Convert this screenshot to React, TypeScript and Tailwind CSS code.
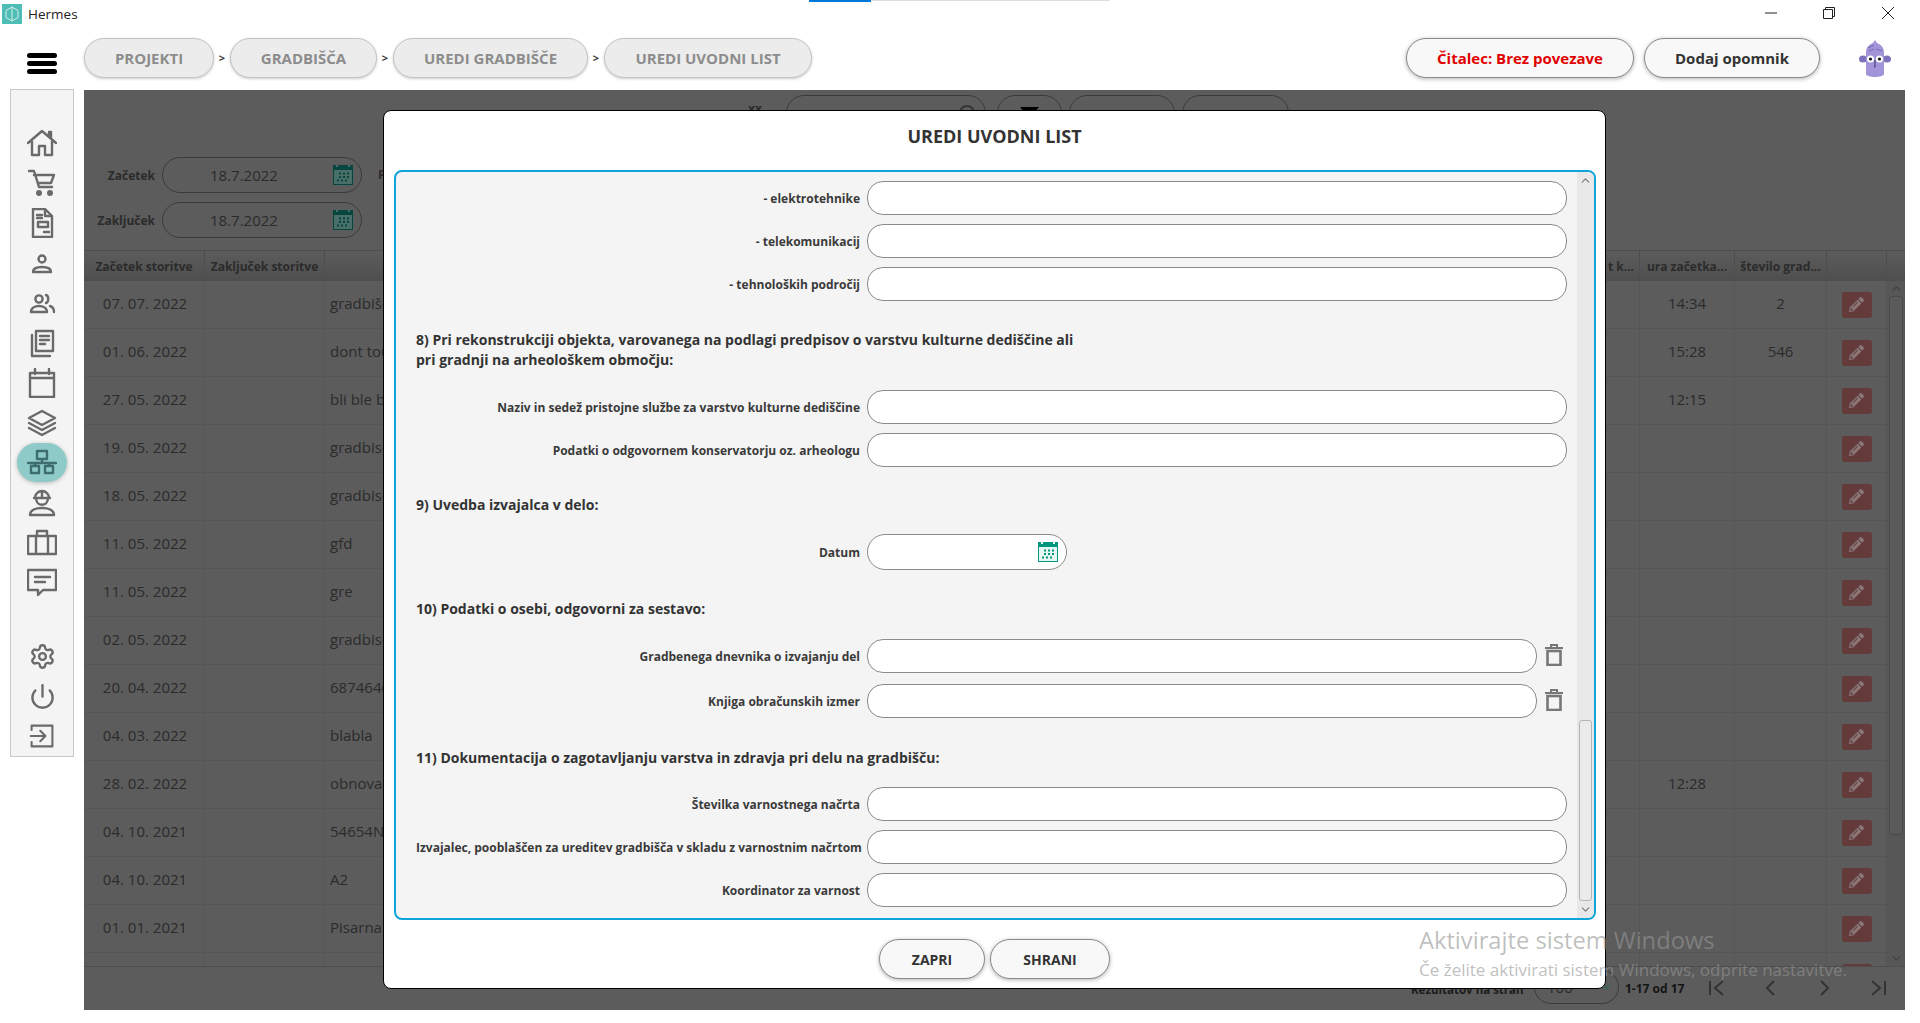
import { ChevronDown, ChevronUp, Power, Settings } from "lucide-react";
import { FaPencilAlt } from "react-icons/fa";

const rows = [
  { date: "07. 07. 2022", name: "gradbišče", time: "14:34", count: "2" },
  { date: "01. 06. 2022", name: "dont touch", time: "15:28", count: "546" },
  { date: "27. 05. 2022", name: "bli ble blo", time: "12:15", count: "" },
  { date: "19. 05. 2022", name: "gradbisce", time: "", count: "" },
  { date: "18. 05. 2022", name: "gradbisce", time: "", count: "" },
  { date: "11. 05. 2022", name: "gfd", time: "", count: "" },
  { date: "11. 05. 2022", name: "gre", time: "", count: "" },
  { date: "02. 05. 2022", name: "gradbisce", time: "", count: "" },
  { date: "20. 04. 2022", name: "6874646", time: "", count: "" },
  { date: "04. 03. 2022", name: "blabla", time: "", count: "" },
  { date: "28. 02. 2022", name: "obnova", time: "12:28", count: "" },
  { date: "04. 10. 2021", name: "54654N", time: "", count: "" },
  { date: "04. 10. 2021", name: "A2", time: "", count: "" },
  { date: "01. 01. 2021", name: "Pisarna", time: "", count: "" },
  { date: "", name: "", time: "", count: "" },
];

function NavIcon({ children, w = 30, h = 30 }: { children: React.ReactNode; w?: number; h?: number }) {
  return (
    <svg width={w} height={h} viewBox="0 0 30 30" fill="none" stroke="currentColor" strokeWidth="2.4" strokeLinecap="round" strokeLinejoin="round">
      {children}
    </svg>
  );
}

const topIcons = [
  <NavIcon key="home"><path d="M1 15 15 3l14 12M5 13v14h7v-9h6v9h7V13M22 7V4h2v5" /></NavIcon>,
  <NavIcon key="cart"><path d="M2 3h5l5 16h13M7 7h20l-3 8H11" /><circle cx="12" cy="25" r="1.8" fill="currentColor" /><circle cx="23" cy="25" r="1.8" fill="currentColor" /></NavIcon>,
  <NavIcon key="doc"><path d="M6 1h12l7 7v21H6zM18 1v7h7M10 7h5M10 10h5M11 14h10v5H11zM17 24h5" /></NavIcon>,
  <NavIcon key="person"><circle cx="15" cy="11" r="3.5" /><path d="M6 24c0-4 4-5 9-5s9 1 9 5z" /></NavIcon>,
  <NavIcon key="people"><circle cx="12" cy="11" r="3.6" /><path d="M4 24c0-4 4-6 8-6s8 2 8 6zM19 7c3 1 3 7 0 8M23 18c3 1 4 3 4 6" /></NavIcon>,
  <NavIcon key="pages"><path d="M9 3h17v20H9zM5 7v21h18M13 8h9M13 12h9M13 16h5" /></NavIcon>,
  <NavIcon key="calendar"><path d="M3 5h24v24H3zM3 10h24M8 1v5M22 1v5" /></NavIcon>,
  <NavIcon key="layers"><path d="M15 3 28 10l-13 7L2 10zM2 15l13 7 13-7M2 20l13 7 13-7" /></NavIcon>,
  <NavIcon key="network"><path d="M10 4h10v8H10zM15 12v4M1 16h28M8 16v3M22 16v3M4 19h8v7H4zM18 19h8v7h-8z" /></NavIcon>,
  <NavIcon key="worker"><path d="M7 11h16M8 11a7 7 0 0 1 14 0M15 4v7M9 11c0 9 12 9 12 0M3 28c0-5 6-7 12-7s12 2 12 7z" /></NavIcon>,
  <NavIcon key="case"><path d="M1 9h28v18H1zM10 9V4h10v5M9 9v18M21 9v18" /></NavIcon>,
  <NavIcon key="chat"><path d="M1 3h28v20H16l-5 5v-5H1zM8 10h15M8 15h10" /></NavIcon>,
];

const bottomIcons = [
  <Settings key="settings" size={27} strokeWidth={2.1} />,
  <Power key="power" size={27} strokeWidth={2.1} />,
  <NavIcon key="exit" w={26} h={26}><path d="M3 8V3h24v24H3v-5M2 15h17M13 9l6 6-6 6" /></NavIcon>,
];

function CalendarIcon({ color, line }: { color: string; line: string }) {
  return (
    <svg width="20" height="20" viewBox="0 0 20 20" className="shrink-0">
      <rect x="0" y="0" width="20" height="20" fill={color} />
      <rect x="3" y="0" width="2" height="2" fill={line} />
      <rect x="15" y="0" width="2" height="2" fill={line} />
      <rect x="1" y="5" width="18" height="14" fill={line} />
      {[7.5, 11, 14.5].map((y) =>
        [5, 9, 13].map((x) => <rect key={`${x}-${y}`} x={x + (y === 14.5 ? -1 : 1)} y={y} width="2" height="2" fill={color} />),
      )}
    </svg>
  );
}

function TrashIcon() {
  return (
    <svg width="18" height="22" viewBox="0 0 18 22" fill="none" stroke="#777777" className="mb-[2px] ml-2">
      <path d="M0 4h18" strokeWidth="2" />
      <path d="M6 3V1h6v2" strokeWidth="2" />
      <rect x="2.5" y="7" width="13" height="14" strokeWidth="2.6" />
    </svg>
  );
}

function Field({ label, width = "w-[700px]", trash }: { label: string; width?: string; trash?: boolean }) {
  return (
    <div className="flex items-center">
      <label className="w-[444px] whitespace-nowrap pt-[2px] text-right text-[12px] font-bold text-[#3a3a3a]">{label}</label>
      <input readOnly className={`ml-[7px] h-[34px] ${width} rounded-[16px] border-[1.5px] border-[#8a8a8a] bg-white`} />
      {trash && <TrashIcon />}
    </div>
  );
}

function Heading({ children, className }: { children: React.ReactNode; className: string }) {
  return <p className={`w-[800px] text-[14px] font-bold leading-[20px] text-[#333333] ${className}`}>{children}</p>;
}

function Crumb({ label, width }: { label: string; width: string }) {
  return (
    <div className={`flex h-10 ${width} items-center justify-center rounded-[20px] border-[1.5px] border-[#c4c4c4] bg-[#ececec] text-[15px] font-bold text-[#8c8c8c] shadow-[0_1px_3px_rgba(0,0,0,0.2)]`}>
      {label}
    </div>
  );
}

function Sep() {
  return <span className="w-4 text-center text-[11px] font-bold text-[#333333]">&gt;</span>;
}

function Avatar() {
  return (
    <svg width="32" height="38" viewBox="0 0 32 38">
      <ellipse cx="4" cy="20" rx="4" ry="3.5" fill="#7f72bd" />
      <ellipse cx="28" cy="20" rx="4" ry="3.5" fill="#7f72bd" />
      <path d="M7 13c0-5 4-8 7-9l2-3 2 3c3 1 7 4 7 9v22c0 2-5 3-9 3s-9-1-9-3z" fill="#a294d8" />
      <path d="M9 9 15 6M17 10l6 2M10 12l5-2" stroke="#7d6fb8" strokeWidth="1.2" />
      <circle cx="11.5" cy="20" r="3.6" fill="#ffffff" />
      <circle cx="20.5" cy="20" r="3.6" fill="#ffffff" />
      <circle cx="11.5" cy="20" r="1.6" fill="#111111" />
      <circle cx="20.5" cy="20" r="1.6" fill="#111111" />
      <path d="M16 21v7h-1" stroke="#3b3360" strokeWidth="1" fill="none" />
    </svg>
  );
}

function Modal() {
  return (
    <div className="absolute left-[299px] top-[20px] flex h-[879px] w-[1223px] flex-col rounded-[8px] border border-black bg-white pl-[10px]">
      <h2 className="flex h-[50px] w-[1201px] items-center justify-center text-[18px] font-bold text-[#333333]">UREDI UVODNI LIST</h2>
      <div className="mt-[9px] flex h-[750px] w-[1202px] overflow-hidden rounded-[8px] border-2 border-[#0ea5d9] bg-[#f4f4f4]">
        <div className="flex-1 overflow-hidden pl-5 pt-[9px]">
          <div className="flex flex-col gap-[9px]">
            <Field label="- elektrotehnike" />
            <Field label="- telekomunikacij" />
            <Field label="- tehnoloških področij" />
          </div>
          <Heading className="mb-5 mt-[29px]">
            8) Pri rekonstrukciji objekta, varovanega na podlagi predpisov o varstvu kulturne dediščine ali
            <br />
            pri gradnji na arheološkem območju:
          </Heading>
          <div className="flex flex-col gap-[9px]">
            <Field label="Naziv in sedež pristojne službe za varstvo kulturne dediščine" />
            <Field label="Podatki o odgovornem konservatorju oz. arheologu" />
          </div>
          <Heading className="mb-[19px] mt-[28px]">9) Uvedba izvajalca v delo:</Heading>
          <div className="flex items-center">
            <label className="w-[444px] pt-[2px] text-right text-[12px] font-bold text-[#3a3a3a]">Datum</label>
            <div className="ml-[7px] flex h-9 w-[200px] items-center justify-end rounded-[18px] border-[1.5px] border-[#8a8a8a] bg-white pr-2">
              <CalendarIcon color="#00967f" line="#e8f6f3" />
            </div>
          </div>
          <Heading className="mb-5 mt-[29px]">10) Podatki o osebi, odgovorni za sestavo:</Heading>
          <div className="flex flex-col gap-[11px]">
            <Field label="Gradbenega dnevnika o izvajanju del" width="w-[670px]" trash />
            <Field label="Knjiga obračunskih izmer" width="w-[670px]" trash />
          </div>
          <Heading className="mb-[19px] mt-[30px]">11) Dokumentacija o zagotavljanju varstva in zdravja pri delu na gradbišču:</Heading>
          <div className="flex flex-col gap-[9px]">
            <Field label="Številka varnostnega načrta" />
            <Field label="Izvajalec, pooblaščen za ureditev gradbišča v skladu z varnostnim načrtom" />
            <Field label="Koordinator za varnost" />
          </div>
        </div>
        <div className="flex w-[17px] flex-col items-center bg-[#e8e8e8] text-[#777777]">
          <ChevronUp size={13} className="mt-[2px]" />
          <div className="mt-auto h-[181px] w-[13px] rounded-[3px] border border-[#b5b5b5] bg-[#ebebeb]" />
          <ChevronDown size={13} className="mb-[2px] mt-[2px]" />
        </div>
      </div>
      <div className="mt-[19px] flex w-[1201px] justify-center gap-[5px] text-[14px] font-bold text-[#333333]">
        <button className="h-10 w-[106px] rounded-[20px] border-[1.5px] border-[#8a8a8a] bg-[#f8f8f8] shadow-[0_1px_4px_rgba(0,0,0,0.3)]">ZAPRI</button>
        <button className="h-10 w-[120px] rounded-[20px] border-[1.5px] border-[#8a8a8a] bg-[#f8f8f8] shadow-[0_1px_4px_rgba(0,0,0,0.3)]">SHRANI</button>
      </div>
    </div>
  );
}

function DateFilter({ label, className, extra }: { label: string; className: string; extra?: string }) {
  return (
    <div className={`flex items-center ${className}`}>
      <label className="w-[71px] pt-[2px] text-right text-[12px] font-bold text-[#2b2b2b]">{label}</label>
      <div className="ml-[7px] flex h-9 w-[200px] items-center rounded-[18px] border border-[#3a3a3a] pl-[47px] pr-2 text-[15px] text-[#2b2b2b]">
        <span className="w-[124px]">18.7.2022</span>
        <CalendarIcon color="#07463e" line="#4a6f69" />
      </div>
      {extra && <span className="ml-[16px] text-[12px] font-bold text-[#2b2b2b]">{extra}</span>}
    </div>
  );
}

export default function App() {
  return (
    <div className="relative flex h-[1023px] w-[1920px] flex-col overflow-hidden bg-white font-['Open_Sans',sans-serif]">
      {/* window title bar */}
      <div className="flex h-[30px] items-center pl-[2px]">
        <svg width="20" height="20" viewBox="0 0 20 20" className="-mt-[2px]">
          <rect width="20" height="20" fill="#4dbdb5" />
          <path d="M10 3 16 6.5v7L10 17l-6-3.5v-7zM10 3v14" fill="none" stroke="#d6f0ee" strokeWidth="1" />
        </svg>
        <span className="ml-[6px] -mt-[2px] text-[13.5px] text-[#222222]">Hermes</span>
        <div className="ml-auto flex items-center text-[#222222]">
          <svg width="12" height="12" viewBox="0 0 12 12" className="-mt-[4px]" fill="none" stroke="currentColor"><path d="M0 6h12" /></svg>
          <svg width="12" height="12" viewBox="0 0 12 12" className="-mt-[4px] ml-[46px]" fill="none" stroke="currentColor"><path d="M.5 2.5h9v9h-9zM2.5 2.5v-2h9v9h-2" /></svg>
          <svg width="12" height="12" viewBox="0 0 12 12" className="-mt-[4px] ml-[47px] mr-[26px]" fill="none" stroke="currentColor"><path d="M0 0l12 12M12 0 0 12" /></svg>
        </div>
      </div>
      <div className="absolute left-[809px] top-0 h-[2px] w-[62px] bg-[#0078d7]" />
      <div className="absolute left-[871px] top-0 h-px w-[239px] bg-[#dddddd]" />

      {/* app header */}
      <div className="flex h-[60px] items-center pb-1 pl-[27px]">
        <div className="mr-[27px] mt-[10px] flex w-[30px] flex-col gap-[3px]">
          <div className="h-[5px] rounded-full bg-black" />
          <div className="h-[5px] rounded-full bg-black" />
          <div className="h-[5px] rounded-full bg-black" />
        </div>
        <Crumb label="PROJEKTI" width="w-[130px]" />
        <Sep />
        <Crumb label="GRADBIŠČA" width="w-[147px]" />
        <Sep />
        <Crumb label="UREDI GRADBIŠČE" width="w-[195px]" />
        <Sep />
        <Crumb label="UREDI UVODNI LIST" width="w-[208px]" />
        <button className="ml-auto h-10 w-[228px] rounded-[20px] border-[1.5px] border-[#8a8a8a] bg-[#f8f8f8] text-[15px] font-bold text-[#e00000] shadow-[0_1px_4px_rgba(0,0,0,0.3)]">Čitalec: Brez povezave</button>
        <button className="ml-[10px] h-10 w-[176px] rounded-[20px] border-[1.5px] border-[#8a8a8a] bg-[#f8f8f8] text-[15px] font-bold text-[#333333] shadow-[0_1px_4px_rgba(0,0,0,0.3)]">Dodaj opomnik</button>
        <div className="ml-[39px] mr-[29px]"><Avatar /></div>
      </div>

      <div className="flex flex-1 items-start">
        {/* sidebar */}
        <nav className="-mt-px ml-[10px] flex h-[668px] w-[64px] flex-col items-center border border-[#c8c8c8] bg-[#f4f4f4] pt-[33px] text-[#6a6a6a]">
          {topIcons.map((icon, i) => (
            <div key={i} className={`flex h-10 w-[50px] items-center justify-center ${i === 8 ? "rounded-[24px] bg-[#8ecbc8] text-[#3d6d6d] shadow-[0_1px_4px_rgba(0,0,0,0.25)]" : ""}`}>
              {icon}
            </div>
          ))}
          <div className="h-[34px]" />
          {bottomIcons.map((icon, i) => (
            <div key={i} className="flex h-10 items-center justify-center">
              {icon}
            </div>
          ))}
        </nav>

        {/* dimmed page behind the dialog */}
        <main className="relative ml-[10px] flex h-[920px] w-[1821px] flex-col bg-[#5c5c5c] pt-[5px] text-[#2b2b2b]">
          <div className="flex h-9">
            <span className="ml-[664px] mt-[5px] w-[38px] text-[12px] font-bold">xx</span>
            <div className="flex h-9 w-[200px] justify-end rounded-[18px] border border-[#3a3a3a] pr-[10px] pt-[9px]">
              <div className="h-4 w-4 rounded-full border-2 border-[#333333]" />
            </div>
            <div className="ml-[11px] flex h-9 w-[65px] justify-center rounded-[18px] border border-[#3a3a3a] pt-[11px]">
              <svg width="19" height="14" viewBox="0 0 19 14"><path d="M0 0h19l-7 8v6H7V8z" fill="#000000" /></svg>
            </div>
            <div className="ml-[7px] h-9 w-[106px] rounded-[18px] border border-[#3a3a3a]" />
            <div className="ml-[7px] h-9 w-[107px] rounded-[18px] border border-[#3a3a3a]" />
          </div>
          <DateFilter label="Začetek" className="mt-[26px]" extra="P" />
          <DateFilter label="Zaključek" className="mt-[9px]" />

          {/* table */}
          <div className="mt-3 flex h-[31px] items-center border-y border-[#4e4e4e] bg-gradient-to-b from-[#5c5c5c] to-[#4f4f4f] text-[12px] font-bold">
            <div className="w-[120px] pt-[2px] text-center">Začetek storitve</div>
            <div className="w-[120px] border-l border-[#4e4e4e] pt-[2px] text-center leading-[27px]">Zaključek storitve</div>
            <div className="w-[1315px] border-l border-[#4e4e4e] pr-[5px] pt-[2px] text-right leading-[27px]">t k...</div>
            <div className="w-[95px] border-l border-[#4e4e4e] pt-[2px] text-center leading-[27px]">ura začetka...</div>
            <div className="w-[92px] border-l border-[#4e4e4e] pt-[2px] text-center leading-[27px]">število grad...</div>
            <div className="h-full w-[60px] border-l border-[#4e4e4e]" />
            <div className="h-full flex-1 border-l border-[#4e4e4e]" />
          </div>
          <div className="flex h-[685px]">
            <div className="w-[1802px] overflow-hidden">
              {rows.map((row, i) => (
                <div key={i} className="flex h-[48px] shrink-0 items-center border-b border-[#565656] text-[15px]">
                  <div className="flex h-full w-[120px] items-center justify-center pb-[2px] pl-[2px]">{row.date}</div>
                  <div className="h-full w-[120px] border-l border-[#565656]" />
                  <div className="flex h-full w-[1315px] items-center border-l border-[#565656] pb-[2px] pl-[5px]">{row.name}</div>
                  <div className="flex h-full w-[95px] items-center justify-center border-l border-[#565656] pb-[2px]">{row.time}</div>
                  <div className="flex h-full w-[92px] items-center justify-center border-l border-[#565656] pb-[2px]">{row.count}</div>
                  <div className="flex h-full w-[60px] items-center justify-center border-l border-[#565656]">
                    <div className="flex h-[26px] w-[30px] items-center justify-center rounded-[3px] bg-[#643a3a] text-[#8a7676]">
                      <FaPencilAlt size={15} />
                    </div>
                  </div>
                </div>
              ))}
            </div>
            <div className="flex flex-1 flex-col items-center border-l border-[#565656] bg-[#575757] text-[#3f3f3f]">
              <ChevronUp size={13} className="mt-[1px]" />
              <div className="mt-[1px] h-[539px] w-[14px] rounded-[3px] border border-[#4a4a4a] bg-[#5a5a5a]" />
              <ChevronDown size={13} className="mb-[1px] mt-auto" />
            </div>
          </div>
          <div className="relative flex flex-1 items-center justify-end border-t border-[#4e4e4e] text-[12px] font-bold">
            <span className="absolute left-[1327px] top-[14px] whitespace-nowrap text-[11.5px] text-[#1c1c1c]">Rezultatov na stran</span>
            <div className="absolute left-[1450px] top-[3px] flex h-[34px] w-[85px] items-center justify-between rounded-[17px] border border-[#3a3a3a] pl-[12px] pr-[6px] text-[15px] font-normal">
              100
              <ChevronDown size={12} className="text-[#0a6b60]" />
            </div>
            <span className="absolute left-[1541px] top-[13px] text-[#141414]">1-17 od 17</span>
            <svg width="16" height="16" viewBox="0 0 16 16" className="absolute left-[1625px] top-[13px]" fill="none" stroke="#333333" strokeWidth="2"><path d="M1 1v14M14 1 6 8l8 7" /></svg>
            <svg width="10" height="16" viewBox="0 0 10 16" className="absolute left-[1681px] top-[13px]" fill="none" stroke="#333333" strokeWidth="2"><path d="M9 1 2 8l7 7" /></svg>
            <svg width="10" height="16" viewBox="0 0 10 16" className="absolute left-[1736px] top-[13px]" fill="none" stroke="#333333" strokeWidth="2"><path d="m1 1 7 7-7 7" /></svg>
            <svg width="16" height="16" viewBox="0 0 16 16" className="absolute left-[1786px] top-[13px]" fill="none" stroke="#333333" strokeWidth="2"><path d="m2 1 8 7-8 7M15 1v14" /></svg>
          </div>
          <Modal />
        </main>
      </div>

      {/* Windows activation watermark */}
      <div className="pointer-events-none absolute left-[1419px] top-[925px] whitespace-nowrap text-[rgba(150,150,150,0.62)]">
        <p className="text-[23.7px] leading-[30px]">Aktivirajte sistem Windows</p>
        <p className="text-[17px] leading-[30px]">Če želite aktivirati sistem Windows, odprite nastavitve.</p>
      </div>
    </div>
  );
}
